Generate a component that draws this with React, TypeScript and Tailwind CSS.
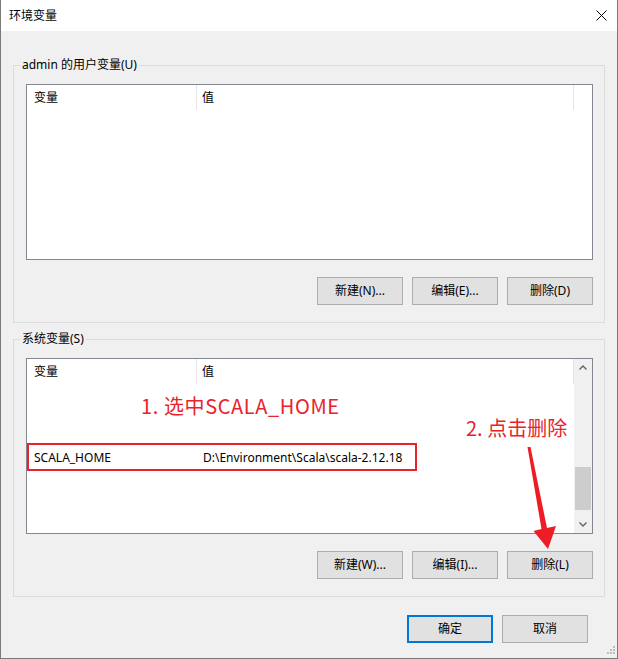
import { ReactNode } from "react"

const WinButton = ({ children, isDefault = false }: { children: ReactNode; isDefault?: boolean }) => (
  <button
    className={`flex h-[28px] w-[86px] items-center justify-center bg-[#e1e1e1] text-[12px] leading-none text-black ${
      isDefault ? "border-2 border-[#0078d7]" : "border border-[#adadad]"
    }`}
  >
    {children}
  </button>
)

const ListHeader = () => (
  <div className="flex h-[25px] items-center text-[12px]">
    <div className="flex h-full w-[170px] items-center border-r border-[#e5e5e5] pl-[7px]">变量</div>
    <div className="flex h-full w-[377px] items-center border-r border-[#e5e5e5] pl-[5px]">值</div>
  </div>
)

const Chevron = ({ up }: { up?: boolean }) => (
  <svg width="8" height="5" viewBox="0 0 8 5" className="text-[#606060]">
    <path d={up ? "M0.5 4.5 L4 1 L7.5 4.5" : "M0.5 0.5 L4 4 L7.5 0.5"} fill="none" stroke="currentColor" strokeWidth="1.3" />
  </svg>
)

const Group = ({ label, children }: { label: string; children: ReactNode }) => (
  <div className="relative ml-[12px] w-[592px] border border-[#dcdcdc] pb-[17px] pl-[12px] pr-[11px] pt-[18px]">
    <span className="absolute left-[6px] top-[-9px] bg-[#f0f0f0] px-[2px] text-[12px] leading-[16px]">{label}</span>
    {children}
  </div>
)

const ButtonRow = ({ labels }: { labels: string[] }) => (
  <div className="mt-[17px] flex justify-end gap-[9px]">
    {labels.map((l) => (
      <WinButton key={l}>{l}</WinButton>
    ))}
  </div>
)

export default function App() {
  return (
    <div className="relative flex h-[659px] w-[618px] flex-col border-x border-b border-[#7a7a7a] bg-[#f0f0f0] font-['Noto_Sans','Noto_Sans_CJK_SC',sans-serif] text-[12px] text-black">
      {/* title bar */}
      <div className="flex h-[31px] shrink-0 items-center justify-between bg-white pl-[8px] pr-[10px]">
        <span className="leading-none">环境变量</span>
        <svg width="11" height="11" viewBox="0 0 11 11">
          <path d="M0.5 0.5 L10.5 10.5 M10.5 0.5 L0.5 10.5" stroke="#000" strokeWidth="1" />
        </svg>
      </div>

      <div className="mt-[34px]">
        <Group label="admin 的用户变量(U)">
          <div className="h-[176px] w-[567px] border border-[#828790] bg-white">
            <ListHeader />
          </div>
          <ButtonRow labels={["新建(N)...", "编辑(E)...", "删除(D)"]} />
        </Group>
      </div>

      <div className="mt-[16px]">
        <Group label="系统变量(S)">
          <div className="flex h-[176px] w-[567px] border border-[#828790] bg-white">
            <div className="flex w-[547px] flex-col">
              <ListHeader />
              <div className="mt-[62px] flex h-[24px] items-center">
                <div className="w-[170px] pl-[7px]">SCALA_HOME</div>
                <div className="pl-[6px]">D:\Environment\Scala\scala-2.12.18</div>
              </div>
            </div>
            <div className="flex w-[18px] flex-col bg-[#f0f0f0]">
              <div className="flex h-[17px] items-center justify-center">
                <Chevron up />
              </div>
              <div className="flex-1">
                <div className="mx-[1px] mt-[91px] h-[43px] bg-[#cdcdcd]" />
              </div>
              <div className="flex h-[17px] items-center justify-center">
                <Chevron />
              </div>
            </div>
          </div>
          <ButtonRow labels={["新建(W)...", "编辑(I)...", "删除(L)"]} />
        </Group>
      </div>

      <div className="mt-[18px] flex justify-end gap-[9px] pr-[29px]">
        <WinButton isDefault>确定</WinButton>
        <WinButton>取消</WinButton>
      </div>

      {/* annotations */}
      <div className="pointer-events-none absolute left-[26px] top-[443px] h-[28px] w-[390px] border-2 border-[#e8212a]" />
      <span className="absolute left-[140px] top-[392px] font-['Noto_Sans_CJK_SC',sans-serif] text-[20px] leading-[28px] tracking-[0.6px] text-[#e8232b]">
        1. 选中SCALA_HOME
      </span>
      <span className="absolute left-[465px] top-[414px] font-['Noto_Sans_CJK_SC',sans-serif] text-[20px] leading-[28px] text-[#e8232b]">
        2. 点击删除
      </span>
      <svg className="pointer-events-none absolute left-0 top-0" width="618" height="659" viewBox="0 0 618 659">
        <polygon points="526.5,447 529.5,447 546,528 555,526 547,549 532.5,531 540.5,529" fill="#ee1c25" />
      </svg>

      {/* resize grip */}
      <svg className="absolute bottom-[1px] right-[1px]" width="12" height="12" viewBox="0 0 12 12">
        <g fill="#bcbcbc">
          <rect x="9" y="1" width="2" height="2" />
          <rect x="6" y="4" width="2" height="2" />
          <rect x="9" y="4" width="2" height="2" />
          <rect x="3" y="7" width="2" height="2" />
          <rect x="6" y="7" width="2" height="2" />
          <rect x="9" y="7" width="2" height="2" />
        </g>
      </svg>
    </div>
  )
}
